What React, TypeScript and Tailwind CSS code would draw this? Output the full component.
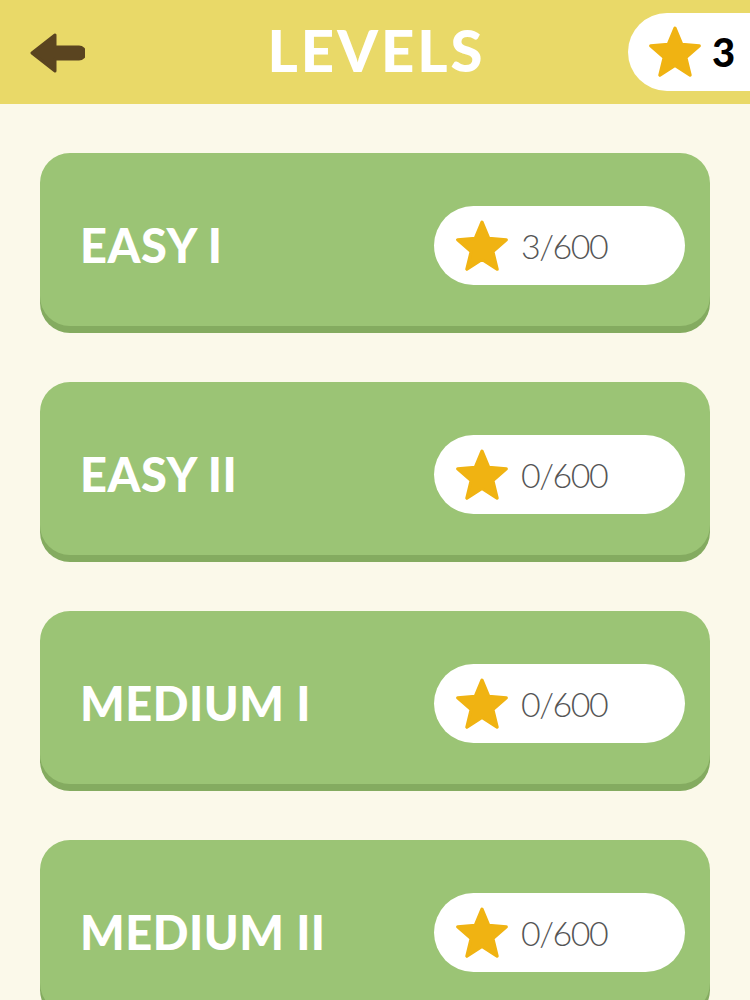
import React from "react";

function Star({ size }: { size: number }) {
  return (
    <svg width={size} height={size} viewBox="0 0 100 100">
      <path
        d="M50 6 L62.5 36 L95 38.5 L70 60 L78 93 L50 75 L22 93 L30 60 L5 38.5 L37.5 36 Z"
        fill="#f0b312"
        stroke="#f0b312"
        strokeWidth="6"
        strokeLinejoin="round"
      />
    </svg>
  );
}

const levels = [
  { name: "EASY I", stars: "3/600" },
  { name: "EASY II", stars: "0/600" },
  { name: "MEDIUM I", stars: "0/600" },
  { name: "MEDIUM II", stars: "0/600" },
];

export default function App() {
  return (
    <div className="w-[750px] h-[1000px] overflow-hidden bg-[#fbf9ea] flex flex-col">
      <div className="h-[104px] bg-[#e9d968] flex items-center shrink-0">
        <div className="pl-[29px] w-[150px] flex items-center pt-[2px]">
          <svg width="56" height="40" viewBox="0 0 56 40">
            <path
              d="M3 20 L26 2 L26 14 L50 14 A6 6 0 0 1 50 26 L26 26 L26 38 Z"
              fill="#5a4420"
              stroke="#5a4420"
              strokeWidth="3"
              strokeLinejoin="round"
            />
          </svg>
        </div>
        <div className="flex-1 flex justify-center">
          <span className="text-white text-[58px] leading-none font-black tracking-[3px] font-['Lato','Open_Sans',sans-serif] pl-[3px] -mt-[4px]">
            LEVELS
          </span>
        </div>
        <div className="w-[150px] flex justify-end">
          <div className="h-[78px] w-[122px] bg-white rounded-l-[40px] flex items-center pl-[20px] gap-[10px]">
            <Star size={54} />
            <span className="text-black text-[40px] font-black font-['Lato',sans-serif] leading-none">3</span>
          </div>
        </div>
      </div>
      <div className="flex flex-col gap-[56px] px-[40px] pt-[49px]">
        {levels.map((l) => (
          <div
            key={l.name}
            className="h-[173px] shrink-0 rounded-[30px] bg-[#9bc475] shadow-[0_7px_0_#84ab60] flex items-center justify-between pl-[40px] pr-[25px] pt-[12px]"
          >
            <span className="text-white text-[47px] font-black font-['Lato',sans-serif] leading-none tracking-[0.5px]">
              {l.name}
            </span>
            <div className="w-[251px] h-[79px] bg-white rounded-full flex items-center pl-[21px] gap-[12px]">
              <Star size={54} />
              <span className="text-[#555555] text-[34px] font-light font-['Lato',sans-serif] leading-none tracking-[-1.5px]">
                {l.stars}
              </span>
            </div>
          </div>
        ))}
      </div>
    </div>
  );
}
